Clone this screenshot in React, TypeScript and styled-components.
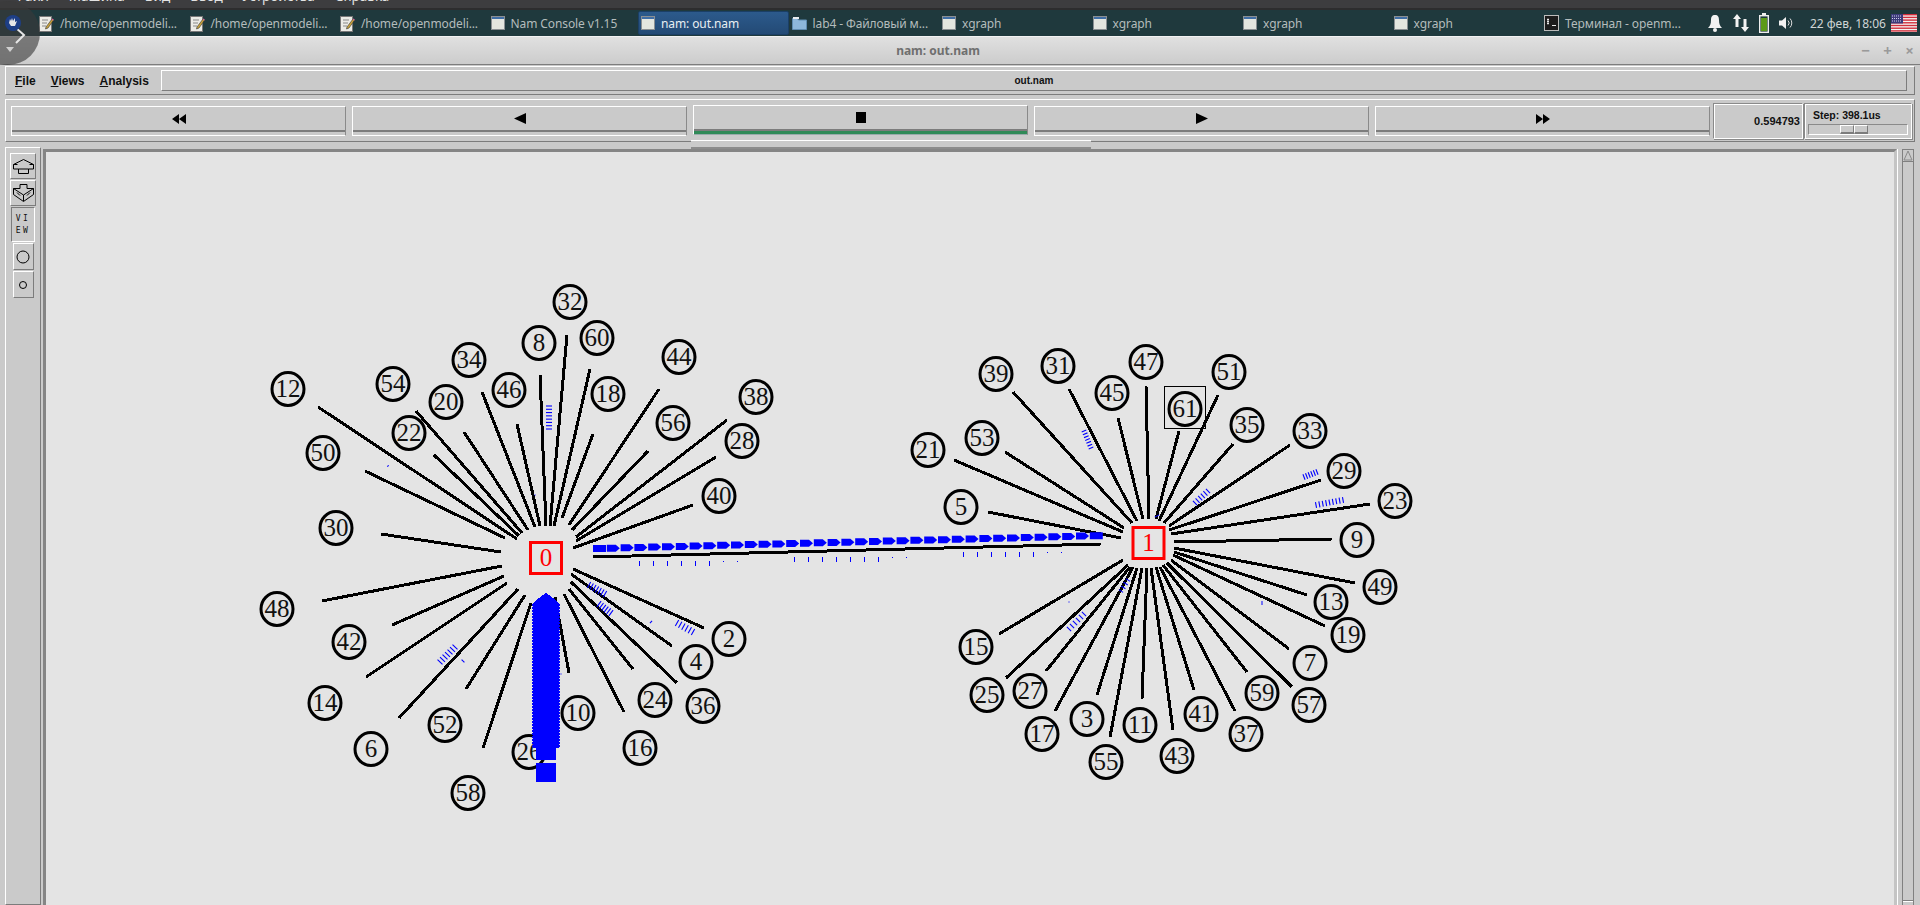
import React from "react";
import styled, { createGlobalStyle, css } from "styled-components";

const GlobalStyle = createGlobalStyle`
  html, body {
    margin: 0;
    padding: 0;
    background: #cacaca;
    overflow: hidden;
  }
`;

const raised = css`
  border-style: solid;
  border-width: 1px;
  border-color: #fff #7c7c7c #7c7c7c #fff;
`;

const etched = css`
  border-style: solid;
  border-width: 1px;
  border-color: #8a8a8a #fff #fff #8a8a8a;
  box-shadow: inset 1px 1px 0 #fff, 1px 1px 0 #8a8a8a;
`;

const Page = styled.div`
  position: relative;
  width: 1920px;
  height: 905px;
  display: flex;
  flex-direction: column;
  overflow: hidden;
  background: #cacaca;
  font-family: "Liberation Sans", Arial, sans-serif;
`;

const GuestMenu = styled.div`
  height: 3px;
  padding-bottom: 7px;
  display: flex;
  align-items: flex-end;
  overflow: hidden;
  background: linear-gradient(#3d3d3f 80%, #2d2d2e 80%);
`;

const GuestMenuItem = styled.span<{ $left: number }>`
  margin-left: ${(p) => p.$left}px;
  font: 13.5px/14px "Noto Sans", sans-serif;
  color: #e2e2e2;
  white-space: nowrap;
`;

const Panel = styled.div`
  height: 26px;
  display: flex;
  align-items: center;
  padding-left: 36px;
  background: #1f393d;
  font: 12px "Noto Sans", sans-serif;
  color: #b4bcbc;
`;

const Task = styled.div<{ $active?: boolean }>`
  width: 150.5px;
  height: 24px;
  flex: none;
  box-sizing: border-box;
  display: flex;
  align-items: center;
  gap: 6px;
  padding-left: 3px;
  letter-spacing: -0.1px;
  white-space: nowrap;
  overflow: hidden;
  ${(p) =>
    p.$active &&
    css`
      background: linear-gradient(#2c5a8c, #234a75);
      border: 1px solid #1b3f66;
      border-radius: 2px;
      color: #e8eef2;
      padding-left: 2px;
    `}
`;

const Tray = styled.div`
  margin-left: auto;
  display: flex;
  align-items: center;
  height: 100%;
  color: #cfd5d5;
`;

const TrayIcon = styled.svg<{ $gap: number }>`
  margin-right: ${(p) => p.$gap}px;
  flex: none;
`;

const Clock = styled.span`
  margin: 0 5px 0 0;
  white-space: nowrap;
`;

const Flag = styled.svg`
  margin-right: 3px;
  flex: none;
`;

const MiniToolbar = styled.div`
  position: absolute;
  left: -24px;
  top: 1px;
  width: 64px;
  height: 64px;
  border-radius: 50%;
  background: rgba(58, 58, 58, 0.62);
`;

const MiniIcon = styled.svg`
  position: absolute;
  left: 24px;
  top: -1px;
`;

const TitleBar = styled.div`
  height: 27px;
  display: flex;
  align-items: center;
  justify-content: center;
  position: relative;
  padding-right: 44px;
  border-top: 1px solid #f2f2f2;
  border-bottom: 1px solid #7d7d7d;
  background: linear-gradient(#e0e0e0, #cccccc);
  font: bold 12px "Noto Sans", sans-serif;
  color: #6f6f6f;
`;

const WindowButtons = styled.div`
  position: absolute;
  right: 3px;
  top: 3px;
  display: flex;
  gap: 7px;
  font: bold 15px/20px "Noto Sans", sans-serif;
  color: #9a9a9a;
`;

const WindowButton = styled.span`
  width: 15px;
  text-align: center;
`;

const MenuFrame = styled.div`
  ${raised}
  height: 27px;
  margin: 1px 5px 0;
  display: flex;
  align-items: center;
  padding: 0 7px 0 9px;
  font-size: 12px;
  font-weight: bold;
  color: #111;
`;

const MenuItem = styled.span`
  margin-right: 15px;
  white-space: nowrap;
  &:first-letter {
    text-decoration: underline;
  }
`;

const FileName = styled.div`
  flex: 1;
  height: 19px;
  margin-left: -3px;
  ${raised}
  display: flex;
  align-items: center;
  justify-content: center;
  font-size: 10px;
`;

const TransportFrame = styled.div`
  ${raised}
  height: 41px;
  margin: 4px 5px 0;
  display: flex;
  align-items: stretch;
  padding: 0 2px 0 5px;
`;

const Buttons = styled.div`
  display: flex;
  flex: none;
  gap: 6px;
  padding-top: 6px;
`;

const TransportButton = styled.div<{ $active?: boolean }>`
  width: 335px;
  height: 30px;
  box-sizing: border-box;
  display: flex;
  flex-direction: column;
  margin-top: ${(p) => (p.$active ? -1 : 0)}px;
  border-top: 1px solid #fff;
  border-left: 1px solid #fff;
  border-bottom: 1px solid ${(p) => (p.$active ? "#9aa" : "#fff")};
  border-right: 1px solid #8a8a8a;
`;

const ButtonFace = styled.div`
  height: 23px;
  display: flex;
  align-items: center;
  justify-content: center;
  flex: none;
`;

const ButtonRule = styled.div`
  height: 2px;
  flex: none;
  background: #7c7c7c;
`;

const ButtonLamp = styled.div<{ $active?: boolean }>`
  flex: 1;
  background: ${(p) => (p.$active ? "#2f8a57" : "transparent")};
`;

const TimeBox = styled.div`
  ${etched}
  flex: none;
  box-sizing: border-box;
  width: 90px;
  height: 36px;
  margin: 3px 0 0 3px;
  display: flex;
  align-items: center;
  justify-content: flex-end;
  padding-right: 2px;
  font-size: 11px;
  font-weight: bold;
  color: #111;
`;

const StepBox = styled.div`
  ${etched}
  flex: none;
  box-sizing: border-box;
  width: 108px;
  height: 36px;
  margin: 3px 0 0 1px;
  display: flex;
  flex-direction: column;
  padding: 4px 3px 0 3px;
  font-size: 10.5px;
  font-weight: bold;
  color: #111;
`;

const StepLabel = styled.span`
  margin-left: 5px;
  line-height: 14px;
`;

const StepTrough = styled.div`
  margin-top: 2px;
  box-sizing: border-box;
  height: 11px;
  width: 100px;
  border-style: solid;
  border-width: 1px;
  border-color: #8a8a8a #fff #fff #8a8a8a;
  display: flex;
  align-items: center;
  padding-left: 31px;
`;

const StepThumb = styled.div`
  ${raised}
  box-sizing: border-box;
  width: 14px;
  height: 9px;
  border-bottom-width: 2px;
`;

const GlitchStrip = styled.div`
  position: absolute;
  left: 691px;
  top: 140px;
  width: 400px;
  height: 6px;
  border-top: 1px solid #fff;
  border-bottom: 2px solid #8c8c8c;
  background: #cacaca;
`;

const Workspace = styled.div`
  flex: 1;
  min-height: 0;
  margin: 5px 6px 0 5px;
  display: flex;
`;

const SideBar = styled.div`
  ${raised}
  width: 34px;
  flex: none;
  display: flex;
  flex-direction: column;
  align-items: center;
  padding-top: 5px;
`;

const ToolButton = styled.div<{ $w: number; $h: number; $sunken?: boolean }>`
  width: ${(p) => p.$w}px;
  height: ${(p) => p.$h}px;
  box-sizing: border-box;
  flex: none;
  margin-bottom: 1px;
  display: flex;
  align-items: center;
  justify-content: center;
  border-style: solid;
  border-width: 1px;
  border-color: ${(p) =>
    p.$sunken ? "#7c7c7c #fff #fff #7c7c7c" : "#fff #7c7c7c #7c7c7c #fff"};
`;

const ViewLabel = styled.span`
  width: 16px;
  font: 8px/12px "DejaVu Sans Mono", monospace;
  letter-spacing: 2.5px;
  color: #111;
  word-break: break-all;
  text-align: center;
`;

const CanvasFrame = styled.div`
  flex: 1;
  min-width: 0;
  margin: 2px 0 0 2px;
  border-style: solid;
  border-width: 3px 3px 0 3px;
  border-color: #858585 #c4c4c4 #fff #858585;
  box-shadow: 1px 0 0 #fff;
  background: #e4e4e4;
  overflow: hidden;
`;

const Diagram = styled.svg`
  display: block;
`;

const NodeText = styled.text`
  font-family: "Liberation Serif", "Times New Roman", serif;
  font-size: 25px;
  text-anchor: middle;
`;

const ScrollBar = styled.div`
  box-sizing: border-box;
  width: 12px;
  flex: none;
  margin: 2px 0 0 5px;
  display: flex;
  flex-direction: column;
  border-left: 1px solid #808080;
  border-right: 1px solid #808080;
  border-top: 1px solid #808080;
`;

const ScrollArrow = styled.svg`
  display: block;
  flex: none;
`;

const ScrollThumb = styled.div`
  flex: 1;
  border-top: 1px solid #808080;
  border-bottom: 1px solid #808080;
`;

const ScrollFoot = styled.div`
  height: 3px;
  flex: none;
  border-top: 1px solid #fff;
`;

type Peer = [string, number, number, number, number, number, number];

// label, node centre, link outer end, link inner end (page coordinates)
const peers: Peer[] = [
  ["32", 571, 302, 568, 335, 551, 526],
  ["8", 540, 343, 541, 375, 547, 526],
  ["60", 598, 338, 591, 369, 555, 526],
  ["34", 470, 360, 483, 392, 536, 527],
  ["44", 680, 357, 660, 389, 570, 525],
  ["46", 510, 390, 518, 424, 541, 526],
  ["18", 609, 394, 594, 434, 563, 518],
  ["54", 394, 384, 417, 411, 523, 533],
  ["20", 447, 402, 465, 432, 529, 530],
  ["12", 289, 389, 319, 407, 518, 539],
  ["22", 410, 433, 435, 455, 520, 536],
  ["56", 674, 423, 649, 451, 573, 530],
  ["38", 757, 397, 728, 420, 577, 537],
  ["28", 743, 441, 717, 457, 577, 541],
  ["50", 324, 453, 366, 471, 506, 538],
  ["40", 720, 496, 694, 505, 574, 548],
  ["30", 337, 528, 382, 534, 502, 552],
  ["48", 278, 609, 323, 601, 503, 566],
  ["42", 350, 642, 393, 625, 505, 576],
  ["14", 326, 703, 367, 677, 508, 583],
  ["6", 372, 749, 400, 718, 519, 589],
  ["52", 446, 725, 467, 689, 526, 595],
  ["26", 530, 752, 540, 745, 545, 600],
  ["58", 469, 793, 484, 748, 532, 603],
  ["10", 579, 713, 570, 673, 556, 597],
  ["16", 641, 748, 625, 712, 565, 594],
  ["24", 656, 700, 634, 669, 570, 589],
  ["36", 704, 706, 678, 683, 572, 582],
  ["4", 697, 662, 673, 646, 572, 574],
  ["2", 730, 639, 705, 628, 574, 569],
  ["39", 997, 374, 1014, 392, 1133, 523],
  ["31", 1059, 366, 1070, 389, 1138, 521],
  ["47", 1147, 362, 1147, 386, 1150, 519],
  ["45", 1113, 393, 1119, 418, 1144, 519],
  ["51", 1230, 372, 1219, 395, 1160, 521],
  ["61", 1186, 409, 1180, 431, 1157, 519],
  ["35", 1248, 425, 1234, 444, 1165, 523],
  ["33", 1311, 431, 1291, 445, 1170, 526],
  ["53", 983, 438, 1006, 452, 1125, 528],
  ["21", 929, 450, 955, 460, 1124, 532],
  ["29", 1345, 471, 1322, 480, 1170, 530],
  ["23", 1396, 501, 1371, 504, 1172, 534],
  ["5", 962, 507, 989, 512, 1122, 538],
  ["9", 1358, 540, 1333, 539, 1175, 542],
  ["49", 1381, 587, 1356, 583, 1175, 548],
  ["13", 1332, 602, 1308, 595, 1175, 552],
  ["19", 1349, 635, 1326, 626, 1174, 555],
  ["7", 1311, 663, 1290, 649, 1172, 560],
  ["57", 1310, 705, 1293, 687, 1168, 563],
  ["59", 1263, 693, 1248, 672, 1164, 565],
  ["37", 1247, 734, 1236, 711, 1161, 567],
  ["41", 1202, 714, 1195, 690, 1157, 567],
  ["43", 1178, 756, 1174, 730, 1152, 568],
  ["11", 1141, 725, 1143, 699, 1148, 568],
  ["55", 1107, 762, 1111, 737, 1143, 568],
  ["3", 1088, 719, 1098, 695, 1138, 568],
  ["17", 1043, 734, 1056, 711, 1134, 567],
  ["27", 1031, 691, 1047, 671, 1131, 567],
  ["25", 988, 695, 1007, 678, 1129, 565],
  ["15", 977, 647, 1000, 634, 1124, 560],
];

// x1, y1, x2, y2, tick count, tick length: packets in flight on the access links
const hatches: [number, number, number, number, number, number][] = [
  [550, 406, 550, 429, 8, 6],
  [536, 495, 540, 495, 1, 1],
  [389, 466, 390, 467, 1, 2],
  [590, 585, 606, 594, 7, 7],
  [600, 604, 612, 613, 6, 7],
  [652, 622, 653, 623, 1, 3],
  [678, 623, 694, 632, 6, 7],
  [441, 662, 456, 647, 7, 7],
  [464, 661, 465, 660, 1, 4],
  [562, 674, 566, 674, 1, 1],
  [1085, 431, 1092, 448, 7, 5],
  [1196, 503, 1209, 491, 6, 6],
  [1305, 477, 1318, 472, 6, 6],
  [1317, 505, 1344, 500, 9, 6],
  [1158, 516, 1159, 518, 1, 5],
  [1122, 591, 1129, 580, 4, 5],
  [1070, 629, 1085, 614, 6, 6],
  [1070, 602, 1071, 602, 1, 1],
  [1263, 602, 1263, 604, 2, 2],
];

function hatchTicks() {
  const ticks: React.ReactElement[] = [];
  hatches.forEach(([x1, y1, x2, y2, n, len], h) => {
    const d = Math.hypot(x2 - x1, y2 - y1) || 1;
    const nx = -(y2 - y1) / d;
    const ny = (x2 - x1) / d;
    for (let i = 0; i < n; i++) {
      const t = n > 1 ? i / (n - 1) : 0;
      const cx = x1 + (x2 - x1) * t;
      const cy = y1 + (y2 - y1) * t;
      ticks.push(
        <line
          key={`${h}-${i}`}
          x1={cx - (nx * len) / 2}
          y1={cy - (ny * len) / 2}
          x2={cx + (nx * len) / 2}
          y2={cy + (ny * len) / 2}
        />
      );
    }
  });
  return ticks;
}

// small ticks below the bottleneck link: group start, y, tall tick count
const linkTicks: [number, number, number][] = [
  [640, 561, 6],
  [795, 557, 7],
  [964, 552, 6],
];

function BottleneckLink() {
  const packets = Array.from({ length: 37 }, (_, i) => {
    const x = 594 + i * 13.8;
    const y = 549 - i * 0.354;
    const pts =
      i === 0 || i === 36
        ? `${x},${y - 4} ${x + 13},${y - 4} ${x + 13},${y + 3} ${x},${y + 3}`
        : `${x},${y - 4} ${x + 9},${y - 4} ${x + 13},${y - 0.5} ${x + 9},${y + 3} ${x},${y + 3}`;
    return <polygon key={i} points={pts} />;
  });
  const ticks: React.ReactElement[] = [];
  linkTicks.forEach(([start, y, n]) => {
    for (let i = 0; i < n; i++) {
      const x = start + i * 14;
      ticks.push(<line key={x} x1={x} y1={y} x2={x} y2={y + 5} />);
    }
    for (let i = 0; i < 2; i++) {
      const x = start + (n + i) * 14;
      ticks.push(<line key={x} x1={x} y1={y} x2={x} y2={y + 1} />);
    }
  });
  return (
    <>
      <line x1={594} y1={557} x2={1102} y2={544} stroke="#000" strokeWidth={3} shapeRendering="crispEdges" />
      <g fill="#0000ff">{packets}</g>
      <g stroke="#0000ff" strokeWidth={1} shapeRendering="crispEdges">{ticks}</g>
    </>
  );
}

function PacketStack() {
  return (
    <g shapeRendering="crispEdges">
      <polygon
        fill="#0000ff"
        points="547,593 557,600 560,604 560,748 557,748 557,760 537,760 537,748 534,748 534,604 537,600"
      />
      <line x1={533.5} y1={604} x2={533.5} y2={748} stroke="#0000ff" strokeDasharray="2 1" />
      <line x1={560.5} y1={604} x2={560.5} y2={748} stroke="#0000ff" strokeDasharray="2 1" />
      <rect x={537} y={763} width={20} height={19} fill="#0000ff" />
    </g>
  );
}

function HubNode({ label, x, y }: { label: string; x: number; y: number }) {
  return (
    <g>
      <rect x={x - 15.5} y={y - 15.5} width={31} height={31} fill="none" stroke="#f00" strokeWidth={3} />
      <NodeText x={x} y={y + 8} fill="#f00">{label}</NodeText>
    </g>
  );
}

function Topology() {
  return (
    <Diagram width={1850} height={753} viewBox="47 152 1850 753">
      <g stroke="#000" strokeWidth={3} shapeRendering="crispEdges">
        {peers.map(([label, , , x1, y1, x2, y2]) => (
          <line key={label} x1={x1} y1={y1} x2={x2} y2={y2} />
        ))}
      </g>
      {peers.map(([label, x, y]) => (
        <g key={label}>
          <ellipse cx={x} cy={y} rx={16} ry={16.5} fill="none" stroke="#000" strokeWidth={3} />
          <NodeText x={x} y={y + 8} fill="#111">{label}</NodeText>
        </g>
      ))}
      <rect x={1165.5} y={386.5} width={41} height={42} fill="none" stroke="#000" strokeWidth={1} />
      <HubNode label="0" x={547} y={558} />
      <HubNode label="1" x={1149.5} y={543} />
      <BottleneckLink />
      <g stroke="#0000ff" strokeWidth={1.1}>{hatchTicks()}</g>
      <PacketStack />
    </Diagram>
  );
}

const DocIcon = () => (
  <svg width="15" height="17" viewBox="0 0 15 17">
    <rect x="0.5" y="1.5" width="12" height="15" fill="#ecebe6" stroke="#777" />
    <path d="M3 5h6M3 8h5M3 11h4" stroke="#888" />
    <path d="M7 12 13 4l1.5 1.2L9 13l-2.5 1z" fill="#c9a23a" stroke="#333" strokeWidth="0.6" />
    <path d="M13 4l1.5 1.2" stroke="#d46a9c" strokeWidth="1.4" />
  </svg>
);

const WindowIcon = () => (
  <svg width="14" height="14" viewBox="0 0 14 14">
    <rect x="0.5" y="0.5" width="13" height="13" fill="#e4e6df" stroke="#8a8f92" />
    <rect x="1" y="1" width="12" height="2" fill="#3f6ea6" />
  </svg>
);

const FolderIcon = () => (
  <svg width="15" height="14" viewBox="0 0 15 14">
    <path d="M0.5 2.5h5l1 1.5h8v9.5h-14z" fill="#8db7da" stroke="#5f8cb0" />
    <rect x="1" y="1" width="6" height="2" fill="#e8eef2" />
  </svg>
);

const TerminalIcon = () => (
  <svg width="15" height="16" viewBox="0 0 15 16">
    <rect x="0.5" y="0.5" width="14" height="15" fill="#1c1c1c" stroke="#bbb" />
    <path d="M3 4.5h2M3 6.5h2M3 8.5h2M4 3.5v6M8 10.5h4" stroke="#e8e8e8" />
  </svg>
);

const StartIcon = styled.svg`
  position: absolute;
  left: 5px;
  top: 15px;
`;

const Rewind = () => (
  <svg width="14" height="10" viewBox="0 0 14 10"><path d="M7 0v10L0 5zM14 0v10L7 5z" /></svg>
);
const Back = () => (
  <svg width="12" height="11" viewBox="0 0 12 11"><path d="M12 0v11L0 5.5z" /></svg>
);
const Stop = () => (
  <svg width="10" height="11" viewBox="0 0 10 11"><rect width="10" height="11" /></svg>
);
const Play = () => (
  <svg width="12" height="11" viewBox="0 0 12 11"><path d="M0 0v11l12-5.5z" /></svg>
);
const Forward = () => (
  <svg width="14" height="10" viewBox="0 0 14 10"><path d="M0 0v10l7-5zM7 0v10l7-5z" /></svg>
);

const transport = [
  { key: "rw", icon: <Rewind /> },
  { key: "back", icon: <Back /> },
  { key: "stop", icon: <Stop />, active: true },
  { key: "play", icon: <Play /> },
  { key: "ff", icon: <Forward /> },
];

const tasks = [
  { label: "/home/openmodeli...", icon: <DocIcon /> },
  { label: "/home/openmodeli...", icon: <DocIcon /> },
  { label: "/home/openmodeli...", icon: <DocIcon /> },
  { label: "Nam Console v1.15", icon: <WindowIcon /> },
  { label: "nam: out.nam", icon: <WindowIcon />, active: true },
  { label: "lab4 - Файловый м...", icon: <FolderIcon /> },
  { label: "xgraph", icon: <WindowIcon /> },
  { label: "xgraph", icon: <WindowIcon /> },
  { label: "xgraph", icon: <WindowIcon /> },
  { label: "xgraph", icon: <WindowIcon /> },
  { label: "Терминал - openm...", icon: <TerminalIcon /> },
];

const guestMenu: [string, number][] = [
  ["Файл", 14],
  ["Машина", 20],
  ["Вид", 20],
  ["Ввод", 20],
  ["Устройства", 19],
  ["Справка", 20],
];

function UsFlag() {
  const stripes = [0, 1, 2, 3, 4, 5, 6];
  return (
    <Flag width="26" height="18" viewBox="0 0 26 18">
      <rect width="26" height="18" fill="#f4f4f4" />
      {stripes.map((i) => (
        <rect key={i} y={i * 2.7} width="26" height="1.4" fill="#d22f3c" />
      ))}
      <rect width="12" height="9.5" fill="#3c3b7a" />
      <path d="M1 2h10M1 4.500h10M1 7h10" stroke="#cfd0ea" strokeDasharray="1 1" />
    </Flag>
  );
}

export default function App() {
  return (
    <Page>
      <GlobalStyle />
      <GuestMenu>
        {guestMenu.map(([label, left]) => (
          <GuestMenuItem key={label} $left={left}>{label}</GuestMenuItem>
        ))}
      </GuestMenu>
      <Panel>
        {tasks.map((t, i) => (
          <Task key={i} $active={t.active}>
            {t.icon}
            {t.label}
          </Task>
        ))}
        <Tray>
          <TrayIcon $gap={10} width="14" height="18" viewBox="0 0 14 18">
            <path d="M7 1c3 0 4 2 4 5 0 4 1 6 3 8H0c2-2 3-4 3-8 0-3 1-5 4-5z" fill="#f2f2f2" />
            <circle cx="7" cy="16" r="2" fill="#f2f2f2" />
          </TrayIcon>
          <TrayIcon $gap={9} width="18" height="20" viewBox="0 0 18 20">
            <path d="M5 1l4 5H6.500v8h-3V6H1zM13 19l-4-5h2.500V6h3v8H17z" fill="#f2f2f2" />
          </TrayIcon>
          <TrayIcon $gap={10} width="10" height="20" viewBox="0 0 10 20">
            <rect x="0.700" y="2.700" width="8.600" height="16.600" fill="#1f393d" stroke="#eee" strokeWidth="1.400" />
            <rect x="3" y="0" width="4" height="2" fill="#eee" />
            <rect x="2" y="5" width="6" height="13" fill="#5c9a18" />
          </TrayIcon>
          <TrayIcon $gap={16} width="15" height="14" viewBox="0 0 15 14">
            <path d="M0 4.500h3L7 1v12L3 9.500H0z" fill="#f2f2f2" />
            <path d="M9 4.500a3.500 3.500 0 0 1 0 5M11 2.500a6.500 6.500 0 0 1 0 9" fill="none" stroke="#ddd" />
          </TrayIcon>
          <Clock>22 фев, 18:06</Clock>
          <UsFlag />
        </Tray>
      </Panel>
      <TitleBar>
        nam: out.nam
        <WindowButtons>
          <WindowButton>−</WindowButton>
          <WindowButton>+</WindowButton>
          <WindowButton>×</WindowButton>
        </WindowButtons>
      </TitleBar>
      <MenuFrame>
        <MenuItem>File</MenuItem>
        <MenuItem>Views</MenuItem>
        <MenuItem>Analysis</MenuItem>
        <FileName>out.nam</FileName>
      </MenuFrame>
      <TransportFrame>
        <Buttons>
          {transport.map((b) => (
            <TransportButton key={b.key} $active={b.active}>
              <ButtonFace>{b.icon}</ButtonFace>
              <ButtonRule />
              <ButtonLamp $active={b.active} />
            </TransportButton>
          ))}
        </Buttons>
        <TimeBox>0.594793</TimeBox>
        <StepBox>
          <StepLabel>Step: 398.1us</StepLabel>
          <StepTrough>
            <StepThumb />
            <StepThumb />
          </StepTrough>
        </StepBox>
      </TransportFrame>
      <GlitchStrip />
      <Workspace>
        <SideBar>
          <ToolButton $w={26} $h={26}>
            <svg width="21" height="15" viewBox="0 0 21 15" fill="none" stroke="#000">
              <path d="M10.500 0.500 20.500 5.500V10h-5v4.500h-10V10h-5V5.500z" />
              <path d="M0.500 5.500h4M16.500 5.500h4M5.500 10h10" />
            </svg>
          </ToolButton>
          <ToolButton $w={26} $h={26}>
            <svg width="21" height="18" viewBox="0 0 21 18" fill="none" stroke="#000">
              <path d="M7 0.500h7v4h6.500l-10 6.500-10-6.500H7z" />
              <path d="M0.500 4.500v6l10 7 10-7v-6M4 8.500 7 11.500M17 8.500 14 11.500M10.500 11v6" />
            </svg>
          </ToolButton>
          <ToolButton $w={24} $h={35} $sunken>
            <ViewLabel>VIEW</ViewLabel>
          </ToolButton>
          <ToolButton $w={21} $h={27}>
            <svg width="14" height="14" viewBox="0 0 14 14" fill="none" stroke="#000"><circle cx="7" cy="7" r="6" /></svg>
          </ToolButton>
          <ToolButton $w={21} $h={27}>
            <svg width="10" height="10" viewBox="0 0 10 10" fill="none" stroke="#000"><circle cx="5" cy="5" r="3.500" /></svg>
          </ToolButton>
        </SideBar>
        <CanvasFrame>
          <Topology />
        </CanvasFrame>
        <ScrollBar>
          <ScrollArrow width="10" height="11" viewBox="0 0 10 11">
            <path d="M5 1 9 10H1z" fill="none" stroke="#8a8a8a" />
          </ScrollArrow>
          <ScrollThumb />
          <ScrollFoot />
        </ScrollBar>
      </Workspace>
      <MiniToolbar>
        <MiniIcon width="40" height="64" viewBox="0 0 40 64">
          <path d="M16 28 24 35 16 43" fill="none" stroke="#e6e6e6" strokeWidth="2" />
          <path d="M6 47h8l-4 5z" fill="#d0d0d0" />
        </MiniIcon>
      </MiniToolbar>
      <StartIcon width="16" height="16" viewBox="0 0 16 16">
        <circle cx="8" cy="8" r="8" fill="#1e3f86" />
        <path d="M4 8l1-4 1 2 1-3 1 3 2-3v4l2-1-2 5H6z" fill="#e8e8e8" />
      </StartIcon>
    </Page>
  );
}
